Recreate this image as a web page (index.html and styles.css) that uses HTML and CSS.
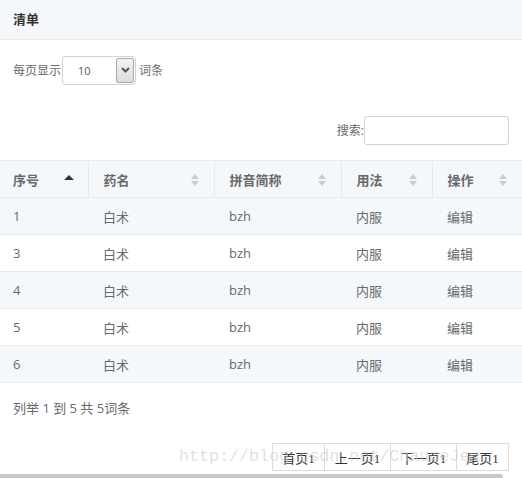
FILE: index.html
```html
<!DOCTYPE html>
<html lang="zh">
<head>
<meta charset="utf-8">
<link rel="stylesheet" href="styles.css">
</head>
<body>
<div class="page">
  <div class="panel-head">清单</div>
  <div class="length">
    <span>每页显示</span>
    <span class="select"><span class="select-val">10</span><span class="select-btn"><svg width="9" height="6" viewBox="0 0 9 6"><path d="M1 1 L4.5 4.5 L8 1" fill="none" stroke="#555" stroke-width="2"/></svg></span></span>
    <span>词条</span>
  </div>
  <div class="search">
    <span>搜索:</span><span class="search-input"></span>
  </div>
  <table class="grid">
    <colgroup>
      <col class="c1"><col class="c2"><col class="c3"><col class="c4"><col class="c5">
    </colgroup>
    <thead>
      <tr>
        <th><span>序号</span><i class="sort asc"></i></th>
        <th><span>药名</span><i class="sort both"></i></th>
        <th><span>拼音简称</span><i class="sort both"></i></th>
        <th><span>用法</span><i class="sort both"></i></th>
        <th><span>操作</span><i class="sort both"></i></th>
      </tr>
    </thead>
    <tbody>
      <tr class="odd"><td>1</td><td>白术</td><td>bzh</td><td>内服</td><td>编辑</td></tr>
      <tr><td>3</td><td>白术</td><td>bzh</td><td>内服</td><td>编辑</td></tr>
      <tr class="odd"><td>4</td><td>白术</td><td>bzh</td><td>内服</td><td>编辑</td></tr>
      <tr><td>5</td><td>白术</td><td>bzh</td><td>内服</td><td>编辑</td></tr>
      <tr class="odd"><td>6</td><td>白术</td><td>bzh</td><td>内服</td><td>编辑</td></tr>
    </tbody>
  </table>
  <div class="info">列举 1 到 5 共 5词条</div>
  <div class="pager-row">
    <div class="pager">
      <span class="pg p1">首页1</span><span class="pg p2">上一页1</span><span class="pg p3">下一页1</span><span class="pg p4">尾页1</span>
    </div>
  </div>
  <div class="scrollbar"><div class="thumb"></div></div>
  <div class="watermark">http://blog.csdn.net/ChaumeJeu</div>
</div>
</body>
</html>
```
FILE: styles.css
```css
html, body {
  margin: 0;
  padding: 0;
  background: #fff;
}
.page {
  position: relative;
  width: 522px;
  height: 478px;
  overflow: hidden;
  font-family: "Open Sans", "Noto Sans CJK SC", sans-serif;
  font-size: 13px;
  color: #676a6c;
}
.panel-head {
  height: 39px;
  line-height: 38px;
  background: #f5f8fa;
  border-bottom: 1px solid #e7eaec;
  padding-left: 13px;
  font-weight: bold;
  color: #333;
}
.length {
  display: flex;
  align-items: center;
  padding: 15px 0 0 13px;
  height: 30px;
  font-size: 12px;
}
.select {
  display: flex;
  width: 72px;
  height: 27px;
  margin: 0 3px 0 1px;
  border: 1px solid #d2d2d2;
  border-radius: 3px;
  background: #fff;
  font-size: 11px;
  color: #555;
}
.select-val {
  flex: 1;
  padding-left: 15px;
  line-height: 27px;
}
.select-btn {
  width: 16px;
  margin: 1px 1px 1px 0;
  border: 1px solid #a8a8a8;
  border-radius: 2px;
  background: linear-gradient(#f3f3f3, #dcdcdc);
  display: flex;
  align-items: center;
  justify-content: center;
}
.search {
  display: flex;
  justify-content: flex-end;
  align-items: center;
  padding: 30px 13px 0 0;
  height: 30px;
  font-size: 12px;
}
.search-input {
  width: 143px;
  height: 27px;
  border: 1px solid #d2d2d2;
  border-radius: 3px;
}
.grid {
  margin-top: 15px;
  width: 522px;
  border-collapse: collapse;
  table-layout: fixed;
}
.c1 { width: 88px; }
.c2 { width: 126px; }
.c3 { width: 127px; }
.c4 { width: 91px; }
.c5 { width: 90px; }
.grid th {
  height: 36px;
  padding: 0 0 0 15px;
  text-align: left;
  font-weight: bold;
  color: #676a6c;
  background: #f5f8fa;
  border-top: 1px solid #e7eaec;
  border-bottom: 1px solid #e7eaec;
  border-left: 1px solid #e7eaec;
  position: relative;
}
.grid th:first-child { border-left: 0; padding-left: 13px; }
.grid td {
  height: 36px;
  padding: 0 0 0 15px;
  border-bottom: 1px solid #e7eaec;
}
.grid td:first-child { padding-left: 13px; }
.grid tr.odd td { background: #f5f8fa; }
.sort {
  position: absolute;
  right: 14px;
  top: 12px;
  width: 10px;
  height: 14px;
}
.sort.asc::before {
  content: "";
  position: absolute;
  left: 0;
  top: 2px;
  border-left: 5px solid transparent;
  border-right: 5px solid transparent;
  border-bottom: 5px solid #333;
}
.sort.both::before,
.sort.both::after {
  content: "";
  position: absolute;
  left: 1px;
  border-left: 4px solid transparent;
  border-right: 4px solid transparent;
}
.sort.both::before { top: 1px; border-bottom: 5px solid #ccc; }
.sort.both::after { top: 8px; border-top: 5px solid #ccc; }
.info {
  padding: 15px 0 0 13px;
  height: 20px;
  line-height: 20px;
}
.pager-row {
  display: flex;
  justify-content: flex-end;
  padding: 25px 13px 0 0;
}
.pager {
  display: flex;
  height: 26px;
  border: 1px solid #ddd;
  border-right: 0;
  color: #333;
  font-family: "Liberation Serif", "Noto Sans CJK SC", serif;
  font-size: 13px;
}
.pg {
  display: flex;
  align-items: center;
  justify-content: center;
  border-right: 1px solid #ddd;
}
.p1 { width: 51px; }
.p2 { width: 65px; }
.p3 { width: 65px; }
.p4 { width: 51px; }
.scrollbar {
  margin-top: 3px;
  height: 6px;
}
.thumb {
  width: 503px;
  height: 6px;
  background: #c8c8c8;
  border-radius: 0 3px 3px 0;
}
.watermark {
  position: absolute;
  left: 179px;
  top: 447px;
  font-family: "Liberation Mono", monospace;
  font-size: 16.7px;
  color: rgba(200, 200, 200, 0.55);
  white-space: nowrap;
}
```
